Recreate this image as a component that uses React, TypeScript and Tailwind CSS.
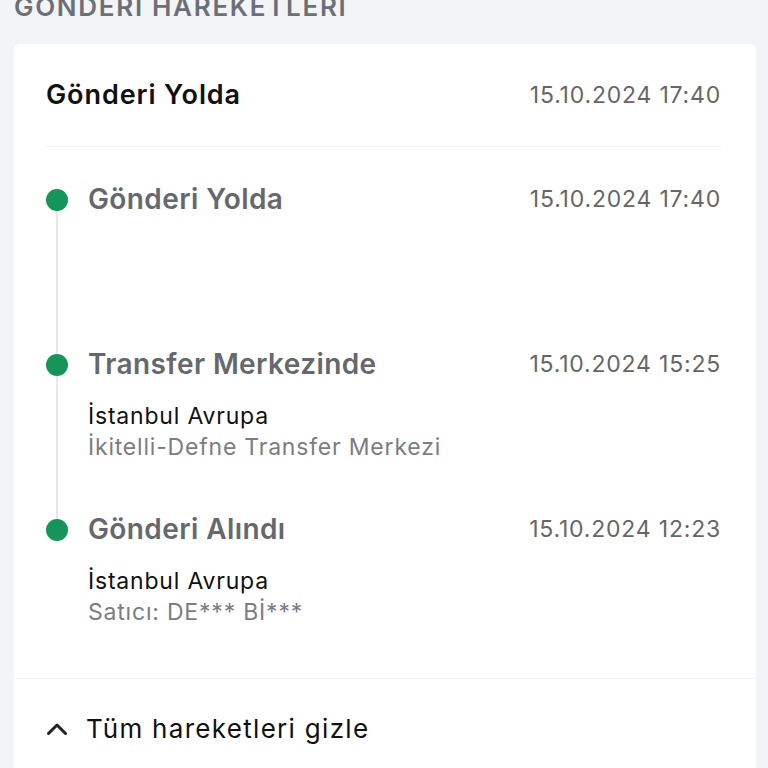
interface Hareket {
  baslik: string;
  tarih: string;
  konum?: string;
  detay?: string;
}

const hareketler: Hareket[] = [
  { baslik: "Gönderi Yolda", tarih: "15.10.2024 17:40" },
  {
    baslik: "Transfer Merkezinde",
    tarih: "15.10.2024 15:25",
    konum: "İstanbul Avrupa",
    detay: "İkitelli-Defne Transfer Merkezi",
  },
  {
    baslik: "Gönderi Alındı",
    tarih: "15.10.2024 12:23",
    konum: "İstanbul Avrupa",
    detay: "Satıcı: DE*** Bİ***",
  },
];

export default function App() {
  return (
    <div
      className="h-[768px] overflow-hidden bg-[#f3f4f6] px-[14px] pr-[12px]"
      style={{ fontFamily: "Inter, 'Noto Sans', sans-serif" }}
    >
      {/* Baslik */}
      <h2 className="-mt-[9px] h-[32px] text-[26px] leading-[32px] font-semibold uppercase tracking-[1.7px] text-[#6b7078]">
        Gönderi Hareketleri
      </h2>

      {/* Kart */}
      <div className="mt-[21px] rounded-[6px] bg-white">
        <div className="px-[32px] pr-[35px]">
          <div className="flex h-[103px] items-center justify-between border-b border-[#f1f2f4]">
            <span className="text-[27px] font-semibold tracking-[0.9px] text-[#111111]">Gönderi Yolda</span>
            <span className="text-[23px] tracking-[0.8px] text-[#666666]">15.10.2024 17:40</span>
          </div>

          {/* Timeline */}
          <div className="relative pt-[36px]">
            <div className="absolute left-[10px] top-[60px] h-[320px] w-[2px] bg-[#e5e7eb]" />
            {hareketler.map((h) => (
              <div key={h.baslik + h.tarih} className="relative flex h-[165px] items-start">
                <div className="mt-[6px] h-[22px] w-[22px] shrink-0 rounded-full bg-[#16955a]" />
                <div className="ml-[20px] flex-1">
                  <div className="flex items-center justify-between">
                    <span className="text-[28px] leading-[32px] font-semibold tracking-[0.4px] text-[#65686d]">{h.baslik}</span>
                    <span className="text-[23px] leading-[32px] tracking-[0.8px] text-[#666666]">{h.tarih}</span>
                  </div>
                  {h.konum && (
                    <div className="mt-[21px]">
                      <div className="text-[23px] leading-[31px] tracking-[0.8px] text-[#111111]">{h.konum}</div>
                      <div className="text-[23px] leading-[31px] tracking-[0.8px] text-[#7a7d82]">{h.detay}</div>
                    </div>
                  )}
                </div>
              </div>
            ))}
          </div>
        </div>

        {/* Alt kisim */}
        <div className="flex h-[100px] items-center border-t border-[#f1f2f4] px-[33px]">
          <svg width="20" height="12" viewBox="0 0 20 12" fill="none" className="text-[#222222]">
            <path d="M1.5 10.5 10 2l8.5 8.5" stroke="currentColor" strokeWidth="3" strokeLinecap="round" strokeLinejoin="round" />
          </svg>
          <span className="ml-[19px] text-[26px] tracking-[1.3px] text-[#111111]">Tüm hareketleri gizle</span>
        </div>
      </div>
    </div>
  );
}
